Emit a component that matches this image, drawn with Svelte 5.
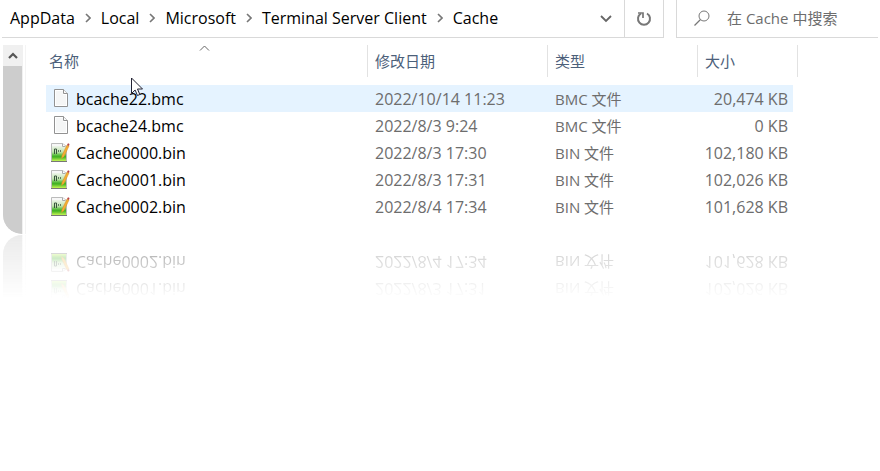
<script>
  const crumbs = ['AppData', 'Local', 'Microsoft', 'Terminal Server Client', 'Cache'];
  const files = [
    { name: 'bcache22.bmc', date: '2022/10/14 11:23', type: 'BMC 文件', size: '20,474 KB', hover: true },
    { name: 'bcache24.bmc', date: '2022/8/3 9:24', type: 'BMC 文件', size: '0 KB' },
    { name: 'Cache0000.bin', date: '2022/8/3 17:30', type: 'BIN 文件', size: '102,180 KB' },
    { name: 'Cache0001.bin', date: '2022/8/3 17:31', type: 'BIN 文件', size: '102,026 KB' },
    { name: 'Cache0002.bin', date: '2022/8/4 17:34', type: 'BIN 文件', size: '101,628 KB' }
  ];
  let query = $state('');
</script>

{#snippet blankIcon()}
  <svg class="file-icon" width="20" height="20" viewBox="0 0 20 20" aria-hidden="true">
    <path d="M4.5.5h9l4 4v13h-13z" fill="#fff" stroke="#929292" />
    <path d="M6 2h7v4h3v10H6z" fill="#f5f6f6" />
    <path d="M13.5.5v4h4" fill="#f8f8f8" stroke="#929292" />
  </svg>
{/snippet}

{#snippet binIcon()}
  <svg class="file-icon" width="20" height="20" viewBox="0 0 20 20" aria-hidden="true">
    <defs>
      <linearGradient id="leaf" x1="0" y1="0" x2="0" y2="1">
        <stop offset="0" stop-color="#eef5ea" />
        <stop offset=".4" stop-color="#bfe3ad" />
        <stop offset=".6" stop-color="#5fbf45" />
        <stop offset=".72" stop-color="#3db021" />
        <stop offset="1" stop-color="#c4f554" />
      </linearGradient>
    </defs>
    <path d="M1.5.5h11l4 3v15h-15z" fill="#f7f7f7" stroke="#bbb" />
    <path d="M2 3h14v15H2z" fill="url(#leaf)" />
    <path d="M4.500 11V6h2v5" fill="none" stroke="#38553c" />
    <path d="M8.500 7v2M10.500 7v2" fill="none" stroke="#5f7a62" />
    <path d="M1 18.500h16" stroke="#777" />
    <path d="M12.500.5v3h3" fill="#fff" stroke="#aaa" />
    <path d="M17 2l2 1-5 10.500-2.500 2 .500-3z" fill="#f5ae32" stroke="#d08a2a" stroke-width=".5" />
    <path d="M17 2l1-1.700 1.500.700-.500 2z" fill="#b94545" />
  </svg>
{/snippet}

{#snippet rows(list)}
  <tbody>
    {#each list as file}
      <tr class:hover={file.hover}>
        <td class="name">
          <span class="file">
            {#if file.name.endsWith('.bin')}{@render binIcon()}{:else}{@render blankIcon()}{/if}
            {file.name}
          </span>
        </td>
        <td>{file.date}</td>
        <td class="type">{file.type}</td>
        <td class="size">{file.size}</td>
      </tr>
    {/each}
  </tbody>
{/snippet}

{#snippet columns()}
  <colgroup>
    <col class="c-name" /><col class="c-date" /><col class="c-type" /><col class="c-size" />
  </colgroup>
{/snippet}

<main class="explorer">
  <header class="toolbar">
    <div class="address">
      <nav aria-label="Path">
        {#each crumbs as crumb, i}
          {#if i > 0}
            <svg width="6" height="10" viewBox="0 0 6 10" aria-hidden="true"><path d="M1 1l4 4-4 4" fill="none" stroke="#777" stroke-width="1.600" /></svg>
          {/if}
          <a href="#{crumb}">{crumb}</a>
        {/each}
      </nav>
      <button class="history" aria-label="Previous locations">
        <svg width="12" height="8" viewBox="0 0 12 8"><path d="M1 1l5 5 5-5" fill="none" stroke="#666" stroke-width="1.800" /></svg>
      </button>
      <button class="refresh" aria-label="Refresh">
        <svg width="16" height="16" viewBox="0 0 16 16">
          <path d="M11 2.500A6 6 0 1 1 5 2.500" fill="none" stroke="#777" stroke-width="2" />
          <path d="M2 2h5v5" fill="none" stroke="#777" stroke-width="1.700" />
        </svg>
      </button>
    </div>
    <label class="search">
      <svg width="16" height="16" viewBox="0 0 16 16" aria-hidden="true">
        <circle cx="10" cy="6" r="5" fill="none" stroke="#777" /><path d="M6.500 9.500L.500 15.500" stroke="#777" stroke-width="1.200" />
      </svg>
      <input type="text" aria-label="Search" placeholder="在 Cache 中搜索" bind:value={query} />
    </label>
  </header>

  <section class="content">
    <div class="scrollbar">
      <button class="up" aria-label="Scroll up">
        <svg width="10" height="8" viewBox="0 0 10 8"><path d="M1 6l4-4 4 4" fill="none" stroke="#555" stroke-width="2.200" /></svg>
      </button>
      <div class="thumb"></div>
    </div>
    <div class="list">
      <table>
        {@render columns()}
        <thead>
          <tr>
            <th class="name" aria-sort="ascending">
              <span>名称</span>
              <svg class="sort" width="11" height="6" viewBox="0 0 11 6" aria-hidden="true"><path d="M1 5.500l4.500-4.500L10 5.500" fill="none" stroke="#666" /></svg>
            </th>
            <th><span>修改日期</span></th>
            <th><span>类型</span></th>
            <th><span>大小</span></th>
          </tr>
        </thead>
        {@render rows(files)}
      </table>
      <svg class="pointer" width="13" height="20" viewBox="0 0 13 20" aria-hidden="true">
        <path d="M.500 1v15.500l3.600-3.500 2.400 5.500 2.300-1L6.500 12h5z" fill="#fff" stroke="#223" />
      </svg>
    </div>
  </section>
</main>

<div class="reflection" aria-hidden="true">
  <div class="content">
    <div class="scrollbar"><div class="thumb"></div></div>
    <div class="list">
      <table>
        {@render columns()}
        {@render rows(files.slice(-2))}
      </table>
    </div>
  </div>
</div>

<style>
  :global(body) {
    background: #fff;
    font: 15px/20px 'Open Sans', 'Noto Sans CJK SC', sans-serif;
    color: #000;
  }
  .explorer, .reflection {
    margin: 0 2px;
    overflow: hidden;
  }
  .explorer {
    border-radius: 20px;
    background: #fff;
  }
  .reflection {
    margin-top: 1px;
  }
  button {
    display: flex;
    align-items: center;
    justify-content: center;
    padding: 0;
    border: 0;
    background: none;
  }
  .toolbar {
    display: flex;
    gap: 12px;
    height: 38px;
  }
  .address, .search {
    box-sizing: border-box;
    display: flex;
    padding-bottom: 1px;
    border-bottom: 1px solid #d9d9d9;
  }
  .address {
    flex: 1;
    padding-bottom: 0;
    border-right: 1px solid #d9d9d9;
  }
  nav {
    flex: 1;
    display: flex;
    align-items: center;
    gap: 10px;
    padding: 0 0 2px 8px;
    font-size: 16px;
    white-space: nowrap;
  }
  nav a {
    color: #000;
    text-decoration: none;
  }
  .history {
    width: 36px;
  }
  .refresh {
    width: 39px;
    border-left: 1px solid #d9d9d9;
  }
  .search {
    width: 202px;
    align-items: center;
    gap: 17px;
    padding-left: 17px;
    border-left: 1px solid #d9d9d9;
  }
  .search svg {
    flex: none;
  }
  input {
    flex: 1;
    min-width: 0;
    padding: 0;
    border: 0;
    outline: 0;
    background: none;
    font: inherit;
  }
  input::placeholder {
    color: #6d6d6d;
    opacity: 1;
  }
  .content {
    display: flex;
    gap: 21px;
  }
  .explorer .content {
    padding-top: 7px;
  }
  .scrollbar {
    display: flex;
    flex-direction: column;
    width: 20px;
    margin-left: 1px;
    border-right: 2px solid #fff;
    border-bottom-left-radius: 20px;
    box-shadow: 1px 0 #f4f4f4;
    background: #f0f0f0;
    background-clip: padding-box;
  }
  .up {
    height: 21px;
  }
  .thumb {
    flex: 1;
    margin-right: 1px;
    border-bottom-left-radius: 20px;
    background: #cdcdcd;
  }
  .list {
    position: relative;
    padding-bottom: 14px;
  }
  table {
    width: 752px;
    table-layout: fixed;
    border-collapse: separate;
    border-spacing: 0;
  }
  .c-name { width: 322px; }
  .c-date { width: 180px; }
  .c-type { width: 150px; }
  .c-size { width: 100px; }
  th {
    position: relative;
    padding: 0 0 8px;
    color: #4c607a;
    font-weight: 400;
    text-align: left;
  }
  th span {
    box-sizing: border-box;
    display: block;
    height: 32px;
    padding-left: 7px;
    border-right: 1px solid #e2e2e2;
    line-height: 32px;
  }
  th.name span {
    padding-left: 3px;
  }
  .sort {
    position: absolute;
    top: 0;
    left: 153px;
  }
  td {
    height: 27px;
    padding: 0 0 0 7px;
    color: #6d6d6d;
    font-size: 16px;
    white-space: nowrap;
  }
  td.name {
    padding-left: 4px;
    color: #000;
  }
  td.type {
    font-size: 15px;
  }
  td.size {
    padding: 0 5px 0 0;
    border-right: 5px solid transparent;
    background-clip: padding-box;
    text-align: right;
  }
  .hover td {
    background-color: #e5f3ff;
  }
  .file {
    display: flex;
    align-items: center;
    gap: 6px;
  }
  .file-icon {
    flex: none;
  }
  .pointer {
    position: absolute;
    top: 32px;
    left: 85px;
  }
  .reflection .content {
    transform: scaleY(-1);
    opacity: 0.4;
    mask-image: linear-gradient(to top, #000, transparent 64px);
  }
</style>
